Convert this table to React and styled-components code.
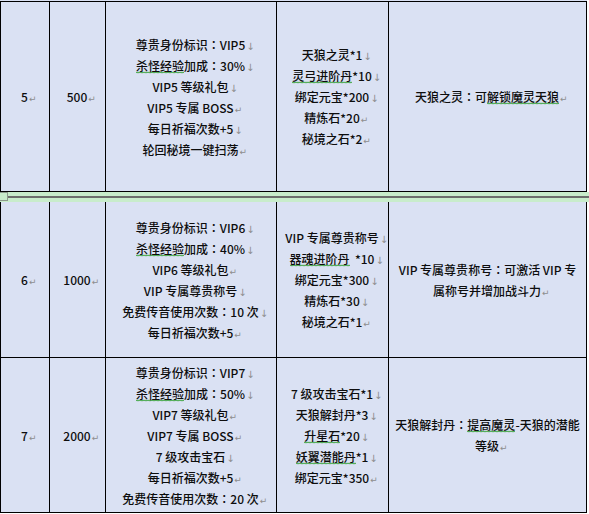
import React from 'react'
import styled, {createGlobalStyle} from 'styled-components'

const GlobalStyle = createGlobalStyle`
  html, body {
    margin: 0;
    padding: 0;
    background: #ffffff;
  }
  body {
    font-family: "Noto Sans CJK SC", "Noto Sans", sans-serif;
    color: #1e1e1e;
  }
`

// '~' wraps words with the spell-check squiggle, trailing ↓ / ↵ are Word's format marks
const rows = [
  {
    height: 189,
    level: '5↵',
    amount: '500↵',
    perks: ['尊贵身份标识：VIP5↓', '~杀怪经验~加成：30%↓', 'VIP5 等级礼包↓', 'VIP5 专属 BOSS↵', '每日祈福次数+5↓', '轮回秘境一键扫荡↵'],
    rewards: ['天狼之灵*1↓', '~灵弓进阶丹~*10↓', '绑定元宝*200↓', '精炼石*20↵', '秘境之石*2↵'],
    note: ['天狼之灵：可~解锁魔灵天狼~↵']
  },
  {
    height: 155,
    level: '6↵',
    amount: '1000↵',
    perks: ['尊贵身份标识：VIP6↓', '~杀怪经验~加成：40%↓', 'VIP6 等级礼包↵', 'VIP 专属尊贵称号↓', '免费传音使用次数：10 次↓', '每日祈福次数+5↵'],
    rewards: ['VIP 专属尊贵称号↓', '~器魂进阶丹~  *10↓', '绑定元宝*300↓', '精炼石*30↓', '秘境之石*1↵'],
    note: ['VIP 专属尊贵称号：可激活 VIP 专', '属称号并增加战斗力↵']
  },
  {
    height: 154,
    level: '7↵',
    amount: '2000↵',
    perks: ['尊贵身份标识：VIP7↓', '~杀怪经验~加成：50%↓', 'VIP7 等级礼包↵', 'VIP7 专属 BOSS↵', '7 级攻击宝石↓', '每日祈福次数+5↵', '免费传音使用次数：20 次↵'],
    rewards: ['7 级攻击宝石*1↓', '天狼解封丹*3↓', '~升星石~*20↓', '~妖翼潜能丹~*1↓', '绑定元宝*350↵'],
    note: ['天狼解封丹：~提高魔灵~-天狼的潜能', '等级↵']
  }
]

// full-width colons get a centred glyph, like the original document font
const withColons = (str, key) =>
  str.split('：').flatMap((s, i) => (i ? [<Colon key={`${key}c${i}`}>：</Colon>, s] : [s]))

const Line = ({text}) => {
  let mark = null
  let body = text
  const last = text.slice(-1)
  if (last === '↓' || last === '↵') {
    mark = last
    body = text.slice(0, -1)
  }
  const parts = body.split('~')
  return (
    <TextLine>
      {parts.map((p, i) => (i % 2
        ? <Squiggle key={i}>{p}</Squiggle>
        : <span key={i}>{withColons(p, i)}</span>))}
      {mark && <Mark $para={mark === '↵'}>{mark}</Mark>}
    </TextLine>
  )
}

const Cell = ({lines}) => (
  <CellBox>
    {lines.map((l, i) => <Line key={i} text={l} />)}
  </CellBox>
)

const TableRow = ({row}) => (
  <>
    <Cell lines={[row.level]} />
    <Cell lines={[row.amount]} />
    <Cell lines={row.perks} />
    <Cell lines={row.rewards} />
    <Cell lines={row.note} />
  </>
)

const App = () => {
  const [first, ...rest] = rows
  return (
    <Page>
      <GlobalStyle />
      <CutEdge />
      <Grid $rows={[first.height]}>
        <TableRow row={first} />
      </Grid>
      <PageBreak>
        <Handle />
        <BreakLine />
      </PageBreak>
      <Grid $rows={rest.map(r => r.height)} $noTop>
        {rest.map((r, i) => <TableRow key={i} row={r} />)}
      </Grid>
    </Page>
  )
}

export default App

const wave = `url("data:image/svg+xml,%3Csvg xmlns='http://www.w3.org/2000/svg' width='4' height='3'%3E%3Cpath d='M0 2.2 L1 0.8 L2 2.2 L3 0.8 L4 2.2' fill='none' stroke='%2334a034' stroke-width='0.8'/%3E%3C/svg%3E")`

const Page = styled.div`
  width: 589px;
  height: 514px;
  overflow: hidden;
  background: #ffffff;
`

const CutEdge = styled.div`
  width: 587px;
  height: 1px;
  background: #dae1f3;
`

const Grid = styled.div`
  display: grid;
  grid-template-columns: 48px 55px 170px 111px 197px;
  grid-template-rows: ${p => p.$rows.map(h => `${h}px`).join(' ')};
  gap: 1px;
  padding: ${p => (p.$noTop ? '0 1px 1px 1px' : '1px')};
  width: max-content;
  background: #000;
`

const CellBox = styled.div`
  background: #dae1f3;
  display: flex;
  flex-direction: column;
  align-items: center;
  justify-content: center;
  overflow: hidden;
`

const TextLine = styled.div`
  font-size: 12px;
  font-weight: 500;
  line-height: 21px;
  height: 21px;
  white-space: pre;
  text-align: center;
  color: #0d0d0d;
`

const Colon = styled.span`
  font-family: "Noto Sans CJK TC", "Noto Sans CJK SC", sans-serif;
`

const Squiggle = styled.span`
  background-image: ${wave};
  background-repeat: repeat-x;
  background-size: 4px 3px;
  background-position: left bottom;
`

const Mark = styled.span`
  display: inline-block;
  width: 0;
  line-height: 1;
  overflow: visible;
  white-space: nowrap;
  font-family: "DejaVu Sans", sans-serif;
  font-weight: 400;
  font-size: ${p => (p.$para ? '9px' : '10px')};
  color: #8d8d8d;
  padding-left: 1px;
`

const PageBreak = styled.div`
  position: relative;
  width: 589px;
  height: 10px;
  background: #c8eccb;
  display: flex;
  flex-direction: column;
  justify-content: center;
`

const BreakLine = styled.div`
  height: 2px;
  margin-left: 8px;
  background: #6c6e6c;
`

const Handle = styled.div`
  position: absolute;
  left: 0;
  top: 0;
  width: 7px;
  height: 7px;
  border: 1px solid #8c9a8c;
  border-left: none;
`
